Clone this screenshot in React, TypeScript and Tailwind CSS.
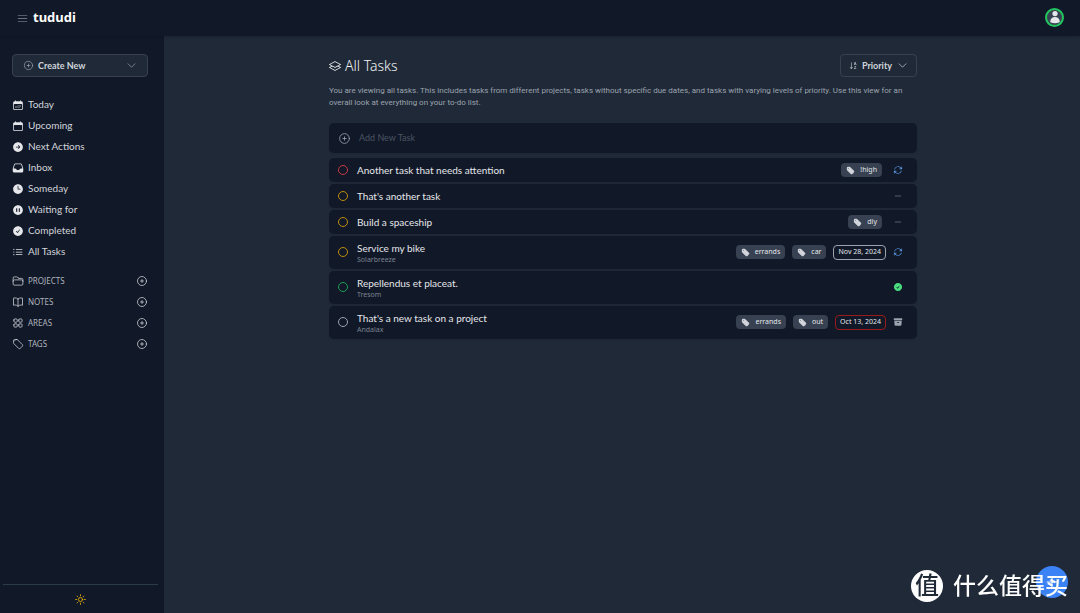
import type { ReactNode } from 'react';
import { BsLayers, BsSortAlphaDown } from 'react-icons/bs';
import {
  HiArchiveBox,
  HiArrowPath,
  HiArrowRightCircle,
  HiBars3,
  HiCalendar,
  HiCalendarDays,
  HiCheckCircle,
  HiClock,
  HiInbox,
  HiListBullet,
  HiMinus,
  HiOutlineBookOpen,
  HiOutlineChevronDown,
  HiOutlineFolder,
  HiOutlinePlusCircle,
  HiOutlineSquares2X2,
  HiOutlineSun,
  HiOutlineTag,
  HiPauseCircle,
  HiPlus,
  HiTag,
  HiUser,
} from 'react-icons/hi2';

const views = [
  { label: 'Today', Icon: HiCalendarDays },
  { label: 'Upcoming', Icon: HiCalendar },
  { label: 'Next Actions', Icon: HiArrowRightCircle },
  { label: 'Inbox', Icon: HiInbox },
  { label: 'Someday', Icon: HiClock },
  { label: 'Waiting for', Icon: HiPauseCircle },
  { label: 'Completed', Icon: HiCheckCircle },
  { label: 'All Tasks', Icon: HiListBullet },
];

const sections = [
  { label: 'PROJECTS', Icon: HiOutlineFolder },
  { label: 'NOTES', Icon: HiOutlineBookOpen },
  { label: 'AREAS', Icon: HiOutlineSquares2X2 },
  { label: 'TAGS', Icon: HiOutlineTag },
];

type Task = {
  title: string;
  project?: string;
  ring: string;
  tags: string[];
  due?: string;
  overdue?: boolean;
  status: ReactNode;
};

const progress = <HiArrowPath className="size-[10px] text-[#60a5fa]" />;
const idle = <HiMinus className="size-[10px] text-[#9ca3af]" />;

const tasks: Task[] = [
  { title: 'Another task that needs attention', ring: 'border-[#c53b43]', tags: ['!high'], status: progress },
  { title: "That's another task", ring: 'border-[#bd8d10]', tags: [], status: idle },
  { title: 'Build a spaceship', ring: 'border-[#bd8d10]', tags: ['diy'], status: idle },
  {
    title: 'Service my bike',
    project: 'Solarbreeze',
    ring: 'border-[#bd8d10]',
    tags: ['errands', 'car'],
    due: 'Nov 28, 2024',
    status: progress,
  },
  {
    title: 'Repellendus et placeat.',
    project: 'Tresom',
    ring: 'border-[#1f9d55]',
    tags: [],
    status: <HiCheckCircle className="size-[10px] text-[#4ade80]" />,
  },
  {
    title: "That's a new task on a project",
    project: 'Andalax',
    ring: 'border-[#9ca3af]',
    tags: ['errands', 'out'],
    due: 'Oct 13, 2024',
    overdue: true,
    status: <HiArchiveBox className="size-[10px] text-[#9ca3af]" />,
  },
];

function Header() {
  return (
    <header className="relative z-10 flex h-9 shrink-0 items-center bg-[#111827] px-4 shadow-sm">
      <button type="button" aria-label="Toggle sidebar" className="text-[#6b7280]">
        <HiBars3 className="size-[13px]" />
      </button>
      <a href="#" className="ml-1 pb-[2px] text-[13px] leading-5 font-bold text-white">
        tududi
      </a>
      <button
        type="button"
        aria-label="Account"
        className="mb-[2px] ml-auto flex size-[19px] items-center justify-center overflow-hidden rounded-full border-2 border-[#22c55e] bg-[#374151] text-[#e5e7eb]"
      >
        <HiUser className="size-[14px]" />
      </button>
    </header>
  );
}

function Sidebar() {
  return (
    <aside className="flex w-[164px] shrink-0 flex-col bg-[#111827] pt-[18px] text-[#d1d5db]">
      <div className="px-3 pr-4">
        <button
          type="button"
          className="flex h-[23px] w-full items-center rounded-[4px] border border-[#374151] bg-[#1f2937] px-[10px] font-[Lato,sans-serif] text-[9px] font-bold text-[#d1d5db]"
        >
          <HiOutlinePlusCircle className="size-[11px] text-[#9ca3af]" />
          <span className="ml-1">Create New</span>
          <HiOutlineChevronDown className="ml-auto size-[11px] text-[#9ca3af]" />
        </button>
      </div>
      <nav className="mt-[17px] px-3 pr-4">
        <ul>
          {views.map(({ label, Icon }) => (
            <li key={label}>
              <a href="#" className="flex h-[21px] items-center gap-1 font-[Lato,sans-serif] text-[10px]">
                <Icon className="size-3 text-[#e5e7eb]" />
                {label}
              </a>
            </li>
          ))}
        </ul>
        <ul className="mt-2">
          {sections.map(({ label, Icon }) => (
            <li key={label} className="flex h-[21px] items-center text-[8px]">
              <a href="#" className="flex items-center gap-1">
                <Icon className="size-3" />
                <span className="text-[#b0b5be]">{label}</span>
              </a>
              <button type="button" aria-label={`Add to ${label}`} className="ml-auto">
                <HiOutlinePlusCircle className="size-3" />
              </button>
            </li>
          ))}
        </ul>
      </nav>
      <div className="mx-[3px] mr-[6px] mt-auto flex h-[29px] items-center justify-center border-t border-[#2c3b4b]">
        <button type="button" aria-label="Toggle theme" className="text-[#eab308]">
          <HiOutlineSun className="size-[13px]" />
        </button>
      </div>
    </aside>
  );
}

function TaskRow({ task }: { task: Task }) {
  return (
    <li
      className={`flex items-center rounded-[5px] bg-[#111827] pr-[14px] pl-[9px] shadow-xs ${task.project ? 'h-[33px] pb-[1px]' : 'h-6'}`}
    >
      <button type="button" aria-label={`Complete ${task.title}`} className={`size-[10px] rounded-full border ${task.ring}`} />
      <div className="ml-[9px]">
        <div className="font-[Lato,sans-serif] text-[10px] leading-[14px] text-[#e5e7eb]">{task.title}</div>
        {task.project && <div className="text-[7px] leading-[9px] text-[#7b8391]">{task.project}</div>}
      </div>
      <div className="ml-auto flex items-center gap-[7px]">
        <div className={`flex gap-[7px] ${task.due ? '' : 'mr-1'}`}>
          {task.tags.map((tag) => (
            <button
              key={tag}
              type="button"
              className="flex h-[14px] items-center gap-[5px] rounded-[4px] bg-[#374151] px-[5px] text-[7px] text-[#e5e7eb]"
            >
              <HiTag className="size-[9px] text-[#d1d5db]" />
              {tag}
            </button>
          ))}
        </div>
        {task.due && (
          <span
            className={`flex h-[15px] items-center rounded-[4px] border px-1 text-[7px] text-[#e5e7eb] ${task.overdue ? 'border-[#991b1b]' : 'border-[#9ca3af]'}`}
          >
            {task.due}
          </span>
        )}
        {task.status}
      </div>
    </li>
  );
}

function FloatingBrand() {
  return (
    <div className="fixed right-3 bottom-[10px] flex items-center gap-[10px] text-white">
      <button
        type="button"
        aria-label="New task"
        className="absolute -top-[2px] right-0 flex size-8 items-center justify-center rounded-full bg-[#3b82f6]"
      >
        <HiPlus className="size-4" />
      </button>
      <span className="relative flex size-8 items-center justify-center rounded-full bg-white font-['Noto_Sans_CJK_SC',sans-serif] text-[24px] leading-8 font-medium text-[#1f2937]">
        <span className="pb-1">值</span>
      </span>
      <span className="relative pb-[3px] font-['Noto_Sans_CJK_SC',sans-serif] text-[23px] leading-8 font-medium">
        什么值得买
      </span>
    </div>
  );
}

export default function App() {
  return (
    <div className="flex min-h-screen flex-col bg-[#1f2937] font-['Noto_Sans',sans-serif]">
      <Header />
      <div className="flex grow">
        <Sidebar />
        <main className="flex grow justify-center pt-[18px] pr-4 pl-[18px]">
          <div className="w-full max-w-[588px]">
            <div className="flex items-center justify-between">
              <h1 className="flex items-center gap-1 text-[14px] leading-5 font-light text-[#f3f4f6]">
                <BsLayers className="size-3" />
                All Tasks
              </h1>
              <button
                type="button"
                className="flex h-[23px] items-center rounded-[4px] border border-[#374151] px-2 font-[Lato,sans-serif] text-[9px] font-bold text-[#d1d5db]"
              >
                <BsSortAlphaDown className="size-[9px]" />
                <span className="ml-1">Priority</span>
                <HiOutlineChevronDown className="ml-[5px] size-[11px]" />
              </button>
            </div>
            <p className="mt-2 font-[Roboto,sans-serif] text-[8px] leading-3 text-[#9ca3af]">
              You are viewing all tasks. This includes tasks from different projects, tasks without specific due dates, and
              tasks with varying levels of priority. Use this view for an overall look at everything on your to-do list.
            </p>
            <label className="mt-[14px] flex h-[30px] items-center rounded-[5px] bg-[#111827] px-[9px] shadow-xs">
              <HiOutlinePlusCircle className="size-[13px] text-[#9ca3af]" />
              <input
                type="text"
                aria-label="Add New Task"
                placeholder="Add New Task"
                className="ml-2 grow bg-transparent font-[Lato,sans-serif] text-[9px] text-[#e5e7eb] outline-none placeholder:text-[#4b5563]"
              />
            </label>
            <ul className="mt-[5px] flex flex-col gap-[2px]">
              {tasks.map((task) => (
                <TaskRow key={task.title} task={task} />
              ))}
            </ul>
          </div>
        </main>
      </div>
      <FloatingBrand />
    </div>
  );
}
